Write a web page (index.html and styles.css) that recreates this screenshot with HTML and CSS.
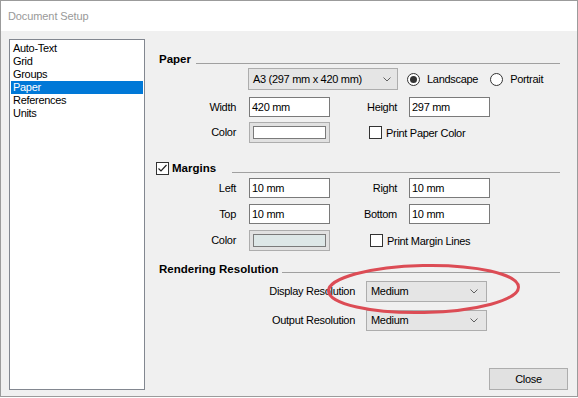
FILE: index.html
```html
<!DOCTYPE html>
<html>
<head>
<meta charset="utf-8">
<title>Document Setup</title>
<link rel="stylesheet" href="styles.css">
</head>
<body>
<div class="window">
  <div class="titlebar">Document Setup</div>
  <div class="client">
    <div class="listbox">
      <div class="item">Auto-Text</div>
      <div class="item">Grid</div>
      <div class="item">Groups</div>
      <div class="item selected">Paper</div>
      <div class="item">References</div>
      <div class="item">Units</div>
    </div>
    <div class="panel">
      <div class="header h-paper"><span class="htext">Paper</span><span class="hline line-paper"></span></div>

      <div class="row r-combo">
        <div class="combo combo-size">
          <span class="combo-text">A3 (297 mm x 420 mm)</span>
          <svg class="chev" width="8" height="5" viewBox="0 0 8 5"><polyline points="0.5,0.5 4,4 7.5,0.5" fill="none" stroke="#606060" stroke-width="1"/></svg>
        </div>
        <span class="radio radio-land"><span class="rcircle on"><span class="rdot"></span></span><span class="rtext">Landscape</span></span>
        <span class="radio radio-port"><span class="rcircle"></span><span class="rtext">Portrait</span></span>
      </div>

      <div class="row r-width">
        <span class="lbl lbl1">Width</span>
        <span class="text">420 mm</span>
        <span class="lbl lbl2">Height</span>
        <span class="text">297 mm</span>
      </div>

      <div class="row r-color">
        <span class="lbl lbl1">Color</span>
        <span class="colorbtn"><span class="swatch sw-white"></span></span>
        <span class="check check-ppc"><span class="cbox"></span><span class="ctext">Print Paper Color</span></span>
      </div>

      <div class="header h-margins">
        <span class="cbox cbox-hdr"><svg width="11" height="11" viewBox="0 0 11 11"><polyline points="1.5,5.5 4,8 9.5,2" fill="none" stroke="#222" stroke-width="1.2"/></svg></span>
        <span class="htext htext-m">Margins</span><span class="hline line-margins"></span>
      </div>

      <div class="row r-left">
        <span class="lbl lbl1">Left</span>
        <span class="text">10 mm</span>
        <span class="lbl lbl2">Right</span>
        <span class="text">10 mm</span>
      </div>

      <div class="row r-top">
        <span class="lbl lbl1">Top</span>
        <span class="text">10 mm</span>
        <span class="lbl lbl2">Bottom</span>
        <span class="text">10 mm</span>
      </div>

      <div class="row r-mcolor">
        <span class="lbl lbl1">Color</span>
        <span class="colorbtn"><span class="swatch sw-grey"></span></span>
        <span class="check check-pml"><span class="cbox"></span><span class="ctext">Print Margin Lines</span></span>
      </div>

      <div class="header h-render"><span class="htext">Rendering Resolution</span><span class="hline line-render"></span></div>

      <div class="row r-display">
        <span class="lbl lbl-res">Display Resolution</span>
        <div class="combo combo-res">
          <span class="combo-text">Medium</span>
          <svg class="chev" width="8" height="5" viewBox="0 0 8 5"><polyline points="0.5,0.5 4,4 7.5,0.5" fill="none" stroke="#606060" stroke-width="1"/></svg>
        </div>
      </div>

      <div class="row r-output">
        <span class="lbl lbl-res">Output Resolution</span>
        <div class="combo combo-res">
          <span class="combo-text">Medium</span>
          <svg class="chev" width="8" height="5" viewBox="0 0 8 5"><polyline points="0.5,0.5 4,4 7.5,0.5" fill="none" stroke="#606060" stroke-width="1"/></svg>
        </div>
      </div>

      <div class="footer">
        <button class="btn">Close</button>
      </div>
    </div>
  </div>
  <svg class="annot" width="578" height="398" viewBox="0 0 578 398">
    <ellipse cx="423.5" cy="289" rx="95" ry="23.5" transform="rotate(-1.2 423.5 289)" fill="none" stroke="#dc4c55" stroke-width="3"/>
  </svg>
</div>
</body>
</html>
```
FILE: styles.css
```css
* { box-sizing: border-box; }
html, body { margin: 0; padding: 0; background: #ffffff; }
body {
  font-family: "Liberation Sans", Arial, sans-serif;
  font-size: 11px;
  letter-spacing: -0.3px;
  color: #000;
}

.window {
  position: relative;
  width: 578px;
  height: 397px;
  border: 1px solid #9b9b9b;
  background: #f0f0f0;
  display: flex;
  flex-direction: column;
}

.titlebar {
  height: 30px;
  flex: none;
  background: #ffffff;
  color: #999999;
  line-height: 31px;
  padding-left: 7px;
  font-size: 11px;
  letter-spacing: -0.1px;
}

.client {
  flex: 1;
  display: flex;
  padding: 8px 9px 6px 8px;
}

.listbox {
  width: 136px;
  height: 351px;
  flex: none;
  background: #ffffff;
  border: 1px solid #828790;
  padding: 2px 1px;
}
.item {
  height: 13px;
  line-height: 13px;
  padding-left: 2px;
  white-space: nowrap;
}
.item.selected {
  background: #0078d7;
  color: #ffffff;
}

.panel {
  flex: 1;
  margin-left: 12px;
  display: flex;
  flex-direction: column;
}

.header {
  display: flex;
  align-items: flex-end;
  height: 14px;
  margin-right: 8px;
  flex: none;
}
.htext {
  font-weight: bold;
  font-size: 11.5px;
  letter-spacing: 0;
  line-height: 14px;
  white-space: nowrap;
  padding-left: 2px;
}
.hline {
  flex: 1;
  height: 1px;
  border-top: 1px solid #a0a0a0;
  margin-bottom: 2px;
}
.line-paper { margin-left: 5px; }
.line-margins { margin-left: 16px; }
.line-render { margin-left: 4px; margin-bottom: 3px; }

.h-paper { margin-top: 13px; }
.h-margins { margin-top: 18px; align-items: center; }
.h-margins .hline { align-self: flex-end; }
.h-render { margin-top: 11px; }

.cbox {
  display: inline-block;
  width: 13px;
  height: 13px;
  border: 1px solid #333333;
  background: #ffffff;
  flex: none;
}
.cbox svg { display: block; }
.cbox-hdr { margin-left: -1px; margin-right: 3px; }
.htext-m { padding-left: 0; }

.row {
  display: flex;
  align-items: center;
  flex: none;
}
.r-combo { margin-top: 2px; height: 22px; }
.r-width { margin-top: 7px; height: 20px; }
.r-color { margin-top: 5px; height: 21px; }
.r-left { margin-top: 3px; height: 20px; }
.r-top { margin-top: 6px; height: 20px; }
.r-mcolor { margin-top: 6px; height: 21px; }
.r-display { margin-top: 5px; height: 21px; }
.r-output { margin-top: 8px; height: 21px; }

.lbl {
  text-align: right;
  white-space: nowrap;
  line-height: 13px;
}
.lbl1 { width: 79px; margin-right: 13px; flex: none; }
.lbl2 { width: 67px; margin-right: 12px; flex: none; }
.lbl-res { width: 198px; margin-right: 11px; flex: none; }

.text {
  width: 81px;
  height: 20px;
  flex: none;
  background: #ffffff;
  border: 1px solid #7a7a7a;
  padding-left: 2px;
  line-height: 18px;
  white-space: nowrap;
}

.combo {
  display: flex;
  align-items: center;
  justify-content: space-between;
  height: 22px;
  background: #e5e5e5;
  border: 1px solid #adadad;
  padding: 0 6px 0 4px;
  flex: none;
}
.combo-size { width: 150px; margin-left: 91px; }
.combo-res { width: 121px; height: 21px; padding-right: 8px; }
.combo-text { white-space: nowrap; line-height: 13px; }
.chev { display: block; }

.radio {
  display: flex;
  align-items: center;
  flex: none;
}
.radio-land { margin-left: 9px; }
.radio-port { margin-left: 12px; }
.rcircle {
  width: 13px;
  height: 13px;
  border: 1px solid #333333;
  border-radius: 50%;
  background: #ffffff;
  display: flex;
  align-items: center;
  justify-content: center;
  flex: none;
}
.rdot {
  width: 7px;
  height: 7px;
  border-radius: 50%;
  background: #333333;
}
.rtext { margin-left: 7px; white-space: nowrap; }

.colorbtn {
  width: 81px;
  height: 21px;
  flex: none;
  background: #e1e1e1;
  border: 1px solid #adadad;
  padding: 3px 3px;
  display: flex;
}
.swatch {
  flex: 1;
  border: 1px solid #7a7a7a;
}
.sw-white { background: #ffffff; }
.sw-grey { background: #dde7e7; }

.check {
  display: flex;
  align-items: center;
  flex: none;
}
.check-ppc { margin-left: 39px; }
.check-pml { margin-left: 40px; }
.ctext { margin-left: 4px; white-space: nowrap; }

.footer {
  margin-top: auto;
  display: flex;
  justify-content: flex-end;
}
.btn {
  width: 79px;
  height: 22px;
  background: #e1e1e1;
  border: 1px solid #adadad;
  font-family: "Liberation Sans", Arial, sans-serif;
  font-size: 11px;
  letter-spacing: -0.3px;
  color: #000;
  padding: 0;
  margin: 0;
}

.annot {
  position: absolute;
  left: -1px;
  top: -1px;
  pointer-events: none;
}
```
